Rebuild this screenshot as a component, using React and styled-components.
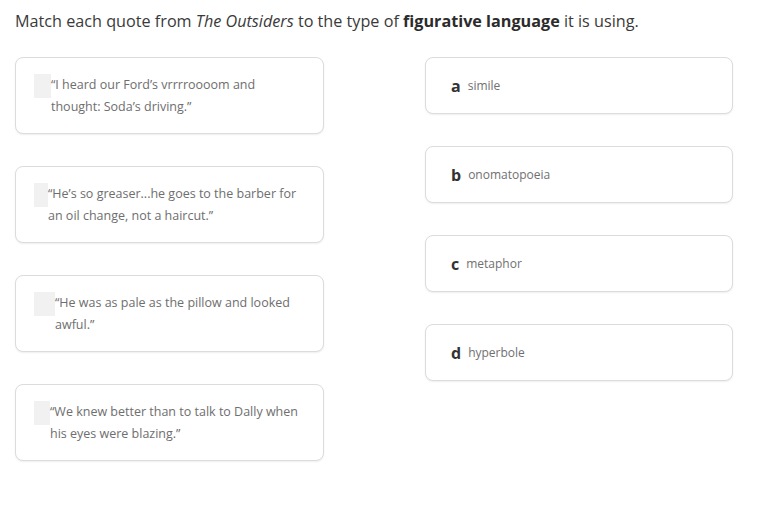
import React from 'react';
import styled, { createGlobalStyle } from 'styled-components';

const quotes = [
  { id: 1, pad: 17, lines: ['“I heard our Ford’s vrrrroooom and', 'thought: Soda’s driving.”'] },
  { id: 2, pad: 14, lines: ['“He’s so greaser...he goes to the barber for', 'an oil change, not a haircut.”'] },
  { id: 3, pad: 21, lines: ['“He was as pale as the pillow and looked', 'awful.”'] },
  { id: 4, pad: 16, lines: ['“We knew better than to talk to Dally when', 'his eyes were blazing.”'] },
];

const answers = [
  { key: 'a', label: 'simile' },
  { key: 'b', label: 'onomatopoeia' },
  { key: 'c', label: 'metaphor' },
  { key: 'd', label: 'hyperbole' },
];

function App() {
  return (
    <>
      <GlobalStyle />
      <Page>
        <Prompt>
          Match each quote from <em>The Outsiders</em> to the type of{' '}
          <strong>figurative language</strong> it is using.
        </Prompt>
        <Columns>
          <Column $gap={32}>
            {quotes.map((quote) => (
              <QuoteCard key={quote.id}>
                <Placeholder $width={quote.pad} />
                <QuoteText>
                  {quote.lines.map((line) => (
                    <Line key={line}>{line}</Line>
                  ))}
                </QuoteText>
              </QuoteCard>
            ))}
          </Column>
          <Column $gap={32}>
            {answers.map((answer) => (
              <AnswerCard key={answer.key}>
                <Letter>{answer.key}</Letter>
                <Label>{answer.label}</Label>
              </AnswerCard>
            ))}
          </Column>
        </Columns>
      </Page>
    </>
  );
}

const GlobalStyle = createGlobalStyle`
  body {
    margin: 0;
    background: #ffffff;
    font-family: 'Open Sans', 'Liberation Sans', sans-serif;
  }
`;

const Page = styled.main`
  padding: 10px 15px;
`;

const Prompt = styled.p`
  margin: 0;
  font-size: 16.2px;
  line-height: 22px;
  color: #3a3a3a;

  strong {
    font-weight: 700;
    color: #2b2b2b;
  }
`;

const Columns = styled.div`
  display: grid;
  grid-template-columns: 309px 308px;
  column-gap: 101px;
  margin-top: 25px;
  align-items: start;
`;

const Column = styled.div`
  display: flex;
  flex-direction: column;
  gap: ${(props) => props.$gap}px;
`;

const Card = styled.div`
  box-sizing: border-box;
  background: #ffffff;
  border: 1px solid #dcdcdc;
  border-radius: 8px;
  box-shadow: 0 1px 2px rgba(0, 0, 0, 0.07);
`;

const QuoteCard = styled(Card)`
  display: flex;
  align-items: flex-start;
  height: 77px;
  padding: 16px 16px 0 18px;
`;

const Placeholder = styled.span`
  flex: none;
  width: ${(props) => props.$width}px;
  height: 24px;
  background: #f1f1f1;
`;

const QuoteText = styled.div`
  font-size: 12.5px;
  line-height: 22px;
  color: #6e6e6e;
`;

const Line = styled.div`
  white-space: nowrap;
`;

const AnswerCard = styled(Card)`
  display: flex;
  align-items: center;
  gap: 7px;
  height: 57px;
  padding: 0 25px;
`;

const Letter = styled.span`
  font-size: 16px;
  font-weight: 700;
  color: #333333;
`;

const Label = styled.span`
  font-size: 12px;
  color: #707070;
`;

export default App;
